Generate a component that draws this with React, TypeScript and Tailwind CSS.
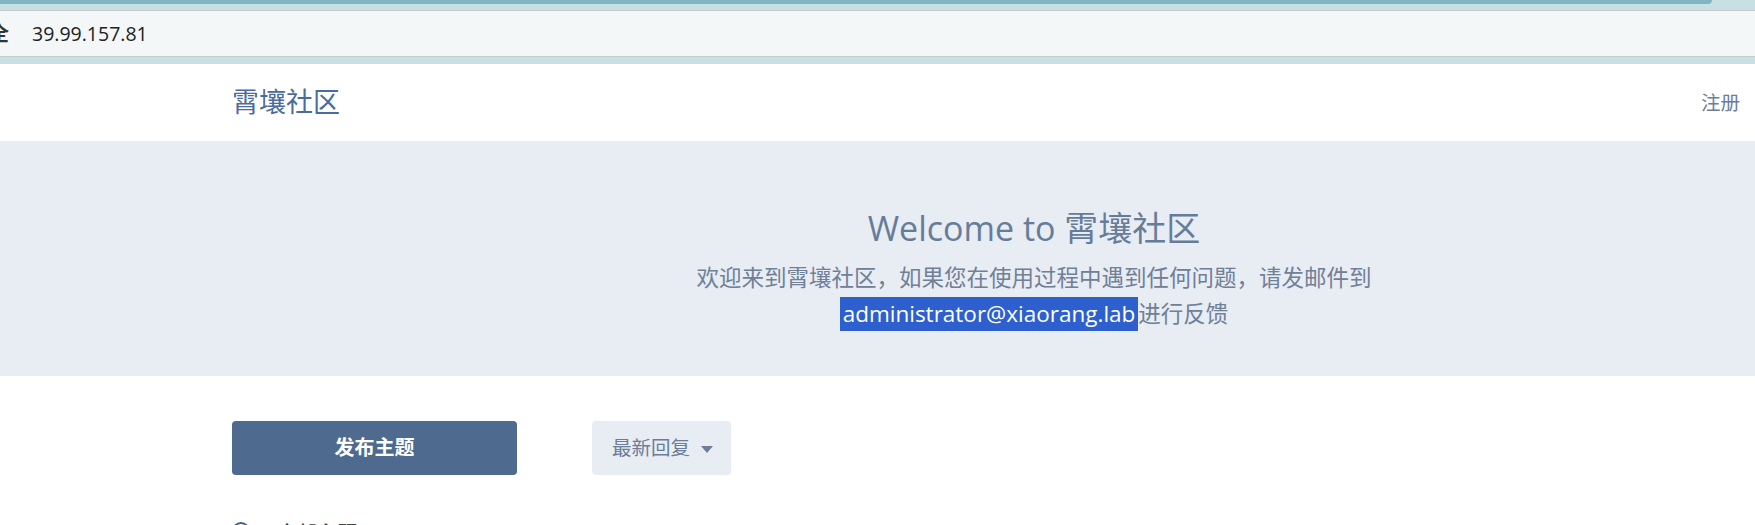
import { useState } from "react";

const font = { fontFamily: '"Open Sans", "Noto Sans CJK SC", sans-serif' };

function BrowserBar() {
  return (
    <div className="bg-[#c8e0e4] h-[64px] flex flex-col">
      <div className="h-[4px] w-[1712px] bg-[#7fb6c0] rounded-br-[6px]" />
      <div className="h-[6px]" />
      <div className="h-[47px] bg-[#f4f7f8] border-y border-[#c6cdcf] flex items-center">
        <span className="ml-[-11px] text-[20px] font-bold text-[#333] leading-none">全</span>
        <span className="ml-[23px] text-[19.5px] text-[#222] leading-none">39.99.157.81</span>
      </div>
    </div>
  );
}

function Header() {
  return (
    <header className="h-[77px] bg-white flex items-center justify-between pl-[232px] pr-[15px]">
      <a className="text-[27px] leading-none text-[#4a6b9c] pb-[2px]" href="#">
        霄壤社区
      </a>
      <a className="text-[19.5px] leading-none text-[#6b7d99]" href="#">
        注册
      </a>
    </header>
  );
}

function Hero() {
  return (
    <section className="bg-[#e8ecf3] pt-[63px] pb-[44px] pl-[313px] flex flex-col items-center text-center">
      <h1 className="text-[34px] leading-[48px] text-[#677c99] font-normal">Welcome to 霄壤社区</h1>
      <div className="mt-[8px] text-[22.5px] text-[#6f8098]">
        <div className="leading-[36px]">欢迎来到霄壤社区，如果您在使用过程中遇到任何问题，请发邮件到</div>
        <div className="h-[36px] flex items-center justify-center">
          <span className="h-[34px] leading-[34px] bg-[#2d5fcf] text-white px-[3px]">administrator@xiaorang.lab</span>
          <span>进行反馈</span>
        </div>
      </div>
    </section>
  );
}

function Toolbar() {
  const [open, setOpen] = useState(false);
  return (
    <div className="pl-[232px] mt-[45px] flex items-center gap-[75px]">
      <button className="w-[285px] h-[54px] rounded-[4px] bg-[#4e6a8e] text-white text-[20px] font-bold">
        发布主题
      </button>
      <button
        onClick={() => setOpen(!open)}
        className="h-[54px] pl-[20px] pr-[18px] rounded-[4px] bg-[#e8ecf3] text-[#6b7d99] text-[19.5px] flex items-center gap-[11px]"
      >
        <span>最新回复</span>
        <svg width="12" height="7" viewBox="0 0 12 7" className="mt-[2px]">
          <path d="M0 0h12L6 7z" fill="#6b7d99" />
        </svg>
      </button>
    </div>
  );
}

export default function App() {
  return (
    <div className="min-h-screen bg-white overflow-hidden" style={font}>
      <BrowserBar />
      <Header />
      <Hero />
      <Toolbar />
      <div className="pl-[232px] mt-[47px] flex items-start gap-[27px]">
        <span className="w-[18px] h-[18px] rounded-full border-2 border-[#4a5f7e]" />
        <span className="mt-[2px] text-[20px] leading-none text-[#444] font-medium">全部主题</span>
      </div>
    </div>
  );
}
